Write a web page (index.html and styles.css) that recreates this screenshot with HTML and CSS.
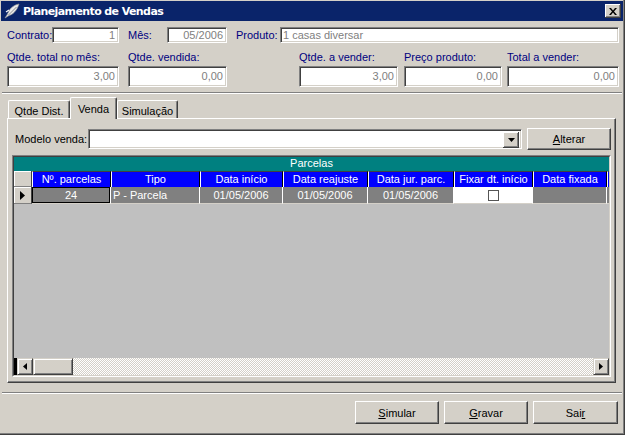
FILE: index.html
```html
<!DOCTYPE html>
<html lang="pt">
<head>
<meta charset="utf-8">
<title>Planejamento de Vendas</title>
<link rel="stylesheet" href="styles.css">
</head>
<body>
<div class="window">
  <div class="titlebar">
    <svg class="app-icon" width="16" height="16" viewBox="0 0 16 16">
      <path d="M15 1C10 2 6 5 4.5 9L3 12L1 15L5 12.5C9 11.5 13 7.5 15 1Z" fill="#ececec" stroke="#9a9a9a" stroke-width="0.7"/>
      <path d="M4.5 12L12.5 4" stroke="#808080" stroke-width="0.9"/>
      <path d="M2 9L5 7" stroke="#fff" stroke-width="1.2"/>
    </svg>
    <span class="title-text">Planejamento de Vendas</span>
    <div class="close-btn">
      <svg width="8" height="7" viewBox="0 0 8 7"><path d="M0 0h2l2 2.4L6 0h2L5 3.5 8 7H6L4 4.6 2 7H0l3-3.5z" fill="#000"/></svg>
    </div>
  </div>

  <div class="content">
    <div class="row1">
      <span class="lbl w-contrato">Contrato:</span>
      <div class="field f-contrato">1</div>
      <span class="lbl w-mes">Mês:</span>
      <div class="field f-mes">05/2006</div>
      <span class="lbl w-produto">Produto:</span>
      <div class="field f-produto">1 casas diversar</div>
    </div>

    <div class="row2">
      <div class="fcol c1"><span class="lbl">Qtde. total no mês:</span><div class="field tall">3,00</div></div>
      <div class="fcol c2"><span class="lbl">Qtde. vendida:</span><div class="field tall">0,00</div></div>
      <div class="fcol c3"><span class="lbl">Qtde. a vender:</span><div class="field tall">3,00</div></div>
      <div class="fcol c4"><span class="lbl">Preço produto:</span><div class="field tall">0,00</div></div>
      <div class="fcol c5"><span class="lbl">Total a vender:</span><div class="field tall">0,00</div></div>
    </div>

    <div class="sep"></div>

    <div class="tabs">
      <div class="tab t1">Qtde Dist.</div>
      <div class="tab t2 active">Venda</div>
      <div class="tab t3">Simulação</div>
    </div>

    <div class="panel">
      <div class="model-row">
        <span class="mlabel">Modelo venda:</span>
        <div class="combo">
          <div class="combo-btn"><svg width="7" height="4" viewBox="0 0 7 4"><path d="M0 0h7L3.5 4z" fill="#000"/></svg></div>
        </div>
        <button class="btn alterar"><u>A</u>lterar</button>
      </div>

      <div class="grid">
        <div class="grid-inner">
          <div class="band">Parcelas</div>
          <div class="hrow">
            <div class="ind hind"></div>
            <div class="hc c-np">Nº. parcelas</div>
            <div class="hc c-tipo">Tipo</div>
            <div class="hc c-di">Data início</div>
            <div class="hc c-dr">Data reajuste</div>
            <div class="hc c-dj">Data jur. parc.</div>
            <div class="hc c-fx">Fixar dt. início</div>
            <div class="hc c-df">Data fixada</div>
            <div class="hc c-ex"></div>
          </div>
          <div class="drow">
            <div class="ind dind"><svg width="5" height="9" viewBox="0 0 5 9"><path d="M0 0v9l5-4.5z" fill="#000"/></svg></div>
            <div class="dc c-np focus">24</div>
            <div class="dc c-tipo left">P - Parcela</div>
            <div class="dc c-di">01/05/2006</div>
            <div class="dc c-dr">01/05/2006</div>
            <div class="dc c-dj">01/05/2006</div>
            <div class="dc c-fx white"><span class="chk"></span></div>
            <div class="dc c-df"></div>
            <div class="dc c-ex"></div>
          </div>
          <div class="empty"></div>
          <div class="hscroll">
            <div class="sb-black"></div>
            <div class="sb-btn"><svg width="4" height="7" viewBox="0 0 4 7"><path d="M4 0v7L0 3.5z" fill="#000"/></svg></div>
            <div class="sb-thumb"></div>
            <div class="sb-track"></div>
            <div class="sb-btn"><svg width="4" height="7" viewBox="0 0 4 7"><path d="M0 0v7l4-3.5z" fill="#000"/></svg></div>
          </div>
        </div>
      </div>
    </div>

    <div class="sep sep2"></div>

    <div class="buttons">
      <button class="btn b-simular"><u>S</u>imular</button>
      <button class="btn b-gravar"><u>G</u>ravar</button>
      <button class="btn b-sair">Sai<u>r</u></button>
    </div>
  </div>
</div>
</body>
</html>
```
FILE: styles.css
```css
* { box-sizing: border-box; }

body {
  margin: 0;
  font: 11px "Liberation Sans", Arial, sans-serif;
  color: #000;
  background: #d4d0c8;
}

.window {
  width: 625px;
  height: 435px;
  background: #d4d0c8;
  padding: 1px 2px 2px 1px;
  box-shadow: inset -1px -1px #404040, inset -2px -2px #808080;
  display: flex;
  flex-direction: column;
}

/* title bar */
.titlebar {
  height: 20px;
  background: #0a246a;
  display: flex;
  align-items: center;
  padding-left: 3px;
  color: #fff;
  font: bold 11px "DejaVu Sans", Verdana, sans-serif;
}
.app-icon { flex: none; }
.title-text { flex: 1; margin-left: 3px; letter-spacing: -0.6px; }
.close-btn {
  width: 16px;
  height: 14px;
  margin-right: 2px;
  background: #d4d0c8;
  box-shadow: inset -1px -1px #404040, inset 1px 1px #fff, inset -2px -2px #808080;
  display: flex;
  align-items: center;
  justify-content: center;
}

.content {
  flex: 1;
  display: flex;
  flex-direction: column;
  padding: 0 4px 0 6px;
}

/* fields */
.lbl {
  color: #000080;
  white-space: nowrap;
  line-height: 13px;
}
.field {
  background: #fff;
  color: #808080;
  border: 1px solid;
  border-color: #808080 #fff #fff #808080;
  box-shadow: inset 1px 1px #404040, inset -1px -1px #d4d0c8;
  padding: 0 3px;
  text-align: right;
  white-space: nowrap;
  overflow: hidden;
}

.row1 {
  display: flex;
  align-items: center;
  margin-top: 6px;
  height: 16px;
}
.row1 .field { height: 16px; line-height: 14px; }
.w-contrato { width: 45px; }
.w-mes { width: 39px; margin-left: 9px; }
.w-produto { width: 44px; margin-left: 9px; }
.f-contrato { width: 67px; }
.f-mes { width: 60px; }
.f-produto { flex: 1; text-align: left; padding-left: 2px; }

.row2 {
  display: flex;
  margin-top: 8px;
}
.fcol { display: flex; flex-direction: column; }
.fcol .lbl { margin-bottom: 2px; }
.field.tall { height: 21px; line-height: 19px; }
.c1 { width: 112px; }
.c2 { width: 99px; margin-left: 9px; }
.c3 { width: 99px; margin-left: 72px; }
.c4 { width: 98px; margin-left: 6px; }
.c5 { flex: 1; margin-left: 5px; }

.sep {
  height: 2px;
  border-top: 1px solid #808080;
  border-bottom: 1px solid #fff;
  margin: 5px -3px 0 -5px;
}
.sep2 { margin-top: 9px; }

/* tabs */
.tabs {
  display: flex;
  align-items: flex-end;
  height: 21px;
  margin-top: 3px;
  padding-left: 1px;
  position: relative;
  z-index: 1;
}
.tab {
  height: 18px;
  padding-top: 4px;
  line-height: 13px;
  text-align: center;
  background: #d4d0c8;
  border-top: 1px solid #fff;
  border-left: 1px solid #fff;
  border-right: 1px solid #404040;
  box-shadow: inset -1px 0 #808080;
  border-radius: 2px 2px 0 0;
  white-space: nowrap;
}
.t1 { width: 62px; }
.t2 { width: 47px; }
.t3 { width: 61px; }
.tab.active {
  height: 22px;
  padding-top: 5px;
  margin-bottom: -1px;
}

/* panel */
.panel {
  margin-right: 3px;
  height: 265px;
  border: 1px solid;
  border-color: #fff #404040 #404040 #fff;
  box-shadow: inset -1px -1px #808080;
  display: flex;
  flex-direction: column;
}
.model-row {
  display: flex;
  align-items: center;
  height: 22px;
  margin-top: 9px;
  padding-left: 7px;
}
.mlabel { width: 73px; white-space: nowrap; }
.combo {
  width: 434px;
  height: 20px;
  background: #fff;
  border: 1px solid;
  border-color: #808080 #fff #fff #808080;
  box-shadow: inset 1px 1px #404040, inset -1px -1px #d4d0c8;
  display: flex;
  justify-content: flex-end;
  padding: 2px;
}
.combo-btn {
  width: 16px;
  height: 16px;
  background: #d4d0c8;
  box-shadow: inset -1px -1px #404040, inset 1px 1px #fff, inset -2px -2px #808080;
  display: flex;
  align-items: center;
  justify-content: center;
}

.btn {
  font: 11px "Liberation Sans", Arial, sans-serif;
  color: #000;
  background: #d4d0c8;
  border: 1px solid;
  border-color: #fff #404040 #404040 #fff;
  box-shadow: inset -1px -1px #808080;
  padding: 0;
  text-align: center;
  border-radius: 0;
}
.alterar { width: 84px; height: 22px; margin-left: 5px; }

/* grid */
.grid {
  margin: 5px 0 0 4px;
  width: 599px;
  height: 222px;
  border: 1px solid;
  border-color: #808080 #fff #fff #808080;
}
.grid-inner {
  height: 100%;
  border: 1px solid;
  border-color: #404040 #d4d0c8 #d4d0c8 #404040;
  background: #c0c0c0;
  display: flex;
  flex-direction: column;
  overflow: hidden;
  color: #fff;
}
.band {
  height: 14px;
  background: #008080;
  text-align: center;
  line-height: 13px;
}
.hrow, .drow { display: flex; flex: none; }
.hrow { height: 16px; }
.drow { height: 17px; }
.ind {
  width: 18px;
  flex: none;
  background: #d4d0c8;
  border-right: 1px solid #404040;
  border-bottom: 1px solid #808080;
  box-shadow: inset 1px 1px #fff;
}
.dind {
  display: flex;
  align-items: center;
  justify-content: center;
}
.hc, .dc {
  flex: none;
  white-space: nowrap;
  overflow: hidden;
  text-align: center;
}
.hc {
  background: #0000ff;
  border-right: 1px solid #000;
  border-top: 1px solid #404040;
  border-left: 1px solid #fff;
  line-height: 14px;
}
.dc {
  background: #808080;
  border-right: 1px solid #fff;
  border-bottom: 1px solid #d4d0c8;
  line-height: 16px;
}
.dc.left { text-align: left; padding-left: 2px; }
.dc.focus { box-shadow: inset 0 0 0 1px #000; }
.dc.white {
  background: #fff;
  display: flex;
  align-items: center;
  justify-content: center;
}
.chk {
  width: 11px;
  height: 11px;
  border: 1px solid #555;
  background: #fff;
}
.c-np { width: 79px; }
.c-tipo { width: 89px; }
.c-di { width: 83px; }
.c-dr { width: 85px; }
.c-dj { width: 86px; }
.c-fx { width: 79px; }
.c-df { width: 74px; }
.c-ex { width: 4px; }

.empty { flex: 1; background: #c0c0c0; }

.hscroll {
  height: 17px;
  display: flex;
  flex: none;
}
.sb-black { width: 3px; background: #000; }
.sb-btn, .sb-thumb {
  flex: none;
  width: 16px;
  background: #d4d0c8;
  border: 1px solid;
  border-color: #d4d0c8 #404040 #404040 #d4d0c8;
  box-shadow: inset 1px 1px #fff, inset -1px -1px #808080;
  display: flex;
  align-items: center;
  justify-content: center;
}
.sb-thumb { width: 40px; }
.sb-track {
  flex: 1;
  background: repeating-conic-gradient(#fff 0 25%, #d4d0c8 0 50%) 0 0 / 2px 2px;
}

/* bottom buttons */
.buttons {
  display: flex;
  justify-content: flex-end;
  gap: 5px;
  margin-top: 7px;
  padding-right: 1px;
}
.buttons .btn { height: 23px; width: 84px; }
.buttons .b-sair { width: 85px; }
```
